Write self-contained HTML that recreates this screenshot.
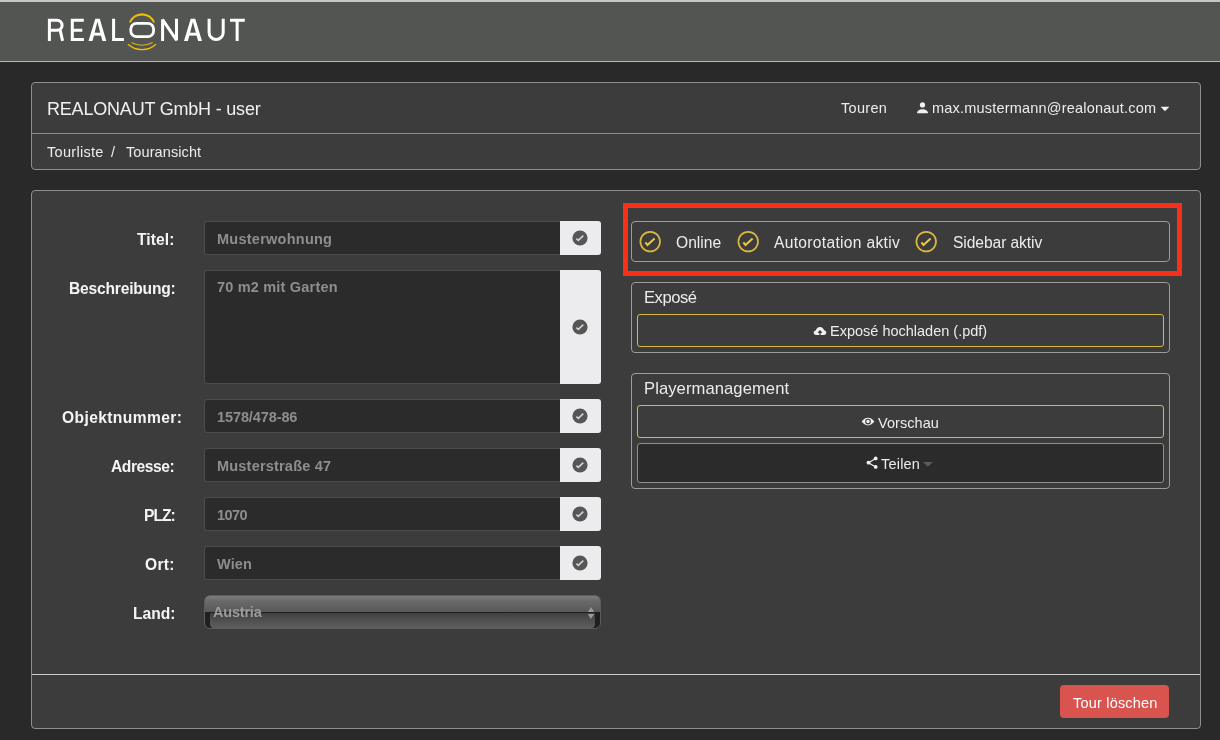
<!DOCTYPE html>
<html><head><meta charset="utf-8">
<style>
*{box-sizing:border-box;margin:0;padding:0}
html,body{width:1220px;height:740px;overflow:hidden;background:#292929;font-family:"Liberation Sans",sans-serif;color:#ececec}
.abs{position:absolute}
#hdr{left:0;top:0;width:1220px;height:62px;background:#535553;border-top:2px solid #c6c6c6;border-bottom:1px solid #dcb94a}
.card{position:absolute;left:31px;width:1170px;background:#3c3c3c;border:1px solid #8e8e8e;border-radius:4px}
.t{position:absolute;white-space:nowrap;will-change:transform}
.n14{font-size:14.5px;line-height:14.5px}
.n15{font-size:15.6px;line-height:15.6px}
.n16{font-size:16.6px;line-height:16.6px}
.lbl{position:absolute;will-change:transform;font-weight:bold;font-size:15.6px;line-height:15.6px;color:#f4f4f4;white-space:nowrap}
.inp{position:absolute;left:204px;width:357px;height:34px;background:#2b2b2b;border:1px solid #4c4c4c;border-right:none;border-radius:3px 0 0 3px}
.iv{position:absolute;will-change:transform;left:217px;font-weight:bold;font-size:14.5px;line-height:14.5px;color:#8e8e8e;white-space:nowrap}
.add{position:absolute;left:560px;width:41px;height:34px;background:#ececee;border-radius:0 3px 3px 0}
.add svg{position:absolute;left:12px;width:16px;height:16px}
.panel{position:absolute;left:631px;width:539px;border:1px solid #9c9c9c;border-radius:4px}
.btn{position:absolute;left:637px;width:527px;border:1px solid #dcb743;border-radius:3px}
</style></head><body>
<div id="hdr" class="abs"></div>
<svg class="abs" style="left:0;top:0" width="260" height="62" viewBox="0 0 260 62">
 <g fill="none" stroke="#fff" stroke-width="3" stroke-linecap="butt" stroke-linejoin="miter">
  <path d="M49.4,40.9V20.35H57.2A4.9,4.9 0 0 1 57.2,30.15H49.4M60.2,30.3L62.6,40.9"/>
  <path d="M83.8,20.35H72.3V39.4H83.9M72.3,30.3H82.3"/>
  <path d="M113.6,18.85V39.4H123.9"/>
  <path d="M162.6,40.9V19.6L176.5,40.2V18.85" stroke-linejoin="bevel"/>
  <path d="M209.1,18.85V32.4A7.05,7.05 0 0 0 223.2,32.4V18.85"/>
  <path d="M230,20.35H244.8M237.15,20.35V40.9"/>
  <rect x="130.8" y="23.3" width="22.8" height="13.4" rx="5.8" stroke-width="2.8"/>
 </g>
 <g fill="#fff">
  <polygon points="88.5,40.9 95.3,18.85 99.8,18.85 106.3,40.9 102.4,40.9 97.4,21.8 92.5,40.9"/>
  <rect x="93" y="32.7" width="9" height="2.9"/>
  <polygon points="184,40.9 190.7,18.85 195.2,18.85 202,40.9 198.1,40.9 192.9,21.8 187.9,40.9"/>
  <rect x="188.5" y="32.7" width="9" height="2.9"/>
 </g>
 <path d="M128.95,22.5A13.8,13.8 0 0 1 155.05,22.5L153.24,22.5A12.6,12.6 0 0 0 130.76,22.5Z" fill="#f2c200"/>
 <g fill="none" stroke="#f2c200">
  <path d="M128,44.3A21,21 0 0 0 156,44.3" stroke-width="1.3"/>
  <path d="M131.6,42.8A23.5,23.5 0 0 0 152.6,42.4" stroke-width="1.1" stroke="#dcb020"/>
 </g>
</svg>

<div class="card" style="top:82px;height:88px">
  <div class="abs" style="left:0;top:50px;width:1168px;height:1px;background:#8e8e8e"></div>
</div>
<div class="t" style="left:47px;top:99.5px;font-size:18px;line-height:18px;letter-spacing:-0.2px;color:#f0f0f0">REALONAUT GmbH - user</div>
<div class="t n14" style="left:841px;top:101px;letter-spacing:0.3px">Touren</div>
<svg class="abs" style="left:916px;top:101px" width="13" height="13" viewBox="0 0 13 13"><circle cx="6.5" cy="3.9" r="2.6" fill="#f0f0f0"/><path d="M1,12.2C1,9.4 4,8.2 6.5,8.2C9,8.2 12,9.4 12,12.2Z" fill="#f0f0f0"/></svg>
<div class="t n14" style="left:932px;top:101px;letter-spacing:0.2px">max.mustermann@realonaut.com</div>
<svg class="abs" style="left:1160px;top:106px" width="10" height="6" viewBox="0 0 10 6"><polygon points="0.6,0.8 9.4,0.8 5,5.3" fill="#f0f0f0"/></svg>
<div class="t n14" style="left:47px;top:144.5px;letter-spacing:0.3px">Tourliste</div>
<div class="t n14" style="left:111px;top:144.5px">/</div>
<div class="t n14" style="left:125.5px;top:144.5px;letter-spacing:0.1px">Touransicht</div>

<div class="card" style="top:190px;height:539px">
  <div class="abs" style="left:0;top:483px;width:1168px;height:1px;background:#cfcfcf"></div>
</div>
<div class="abs" style="left:1060px;top:685px;width:109px;height:33px;background:#d9534f;border-radius:4px"></div>
<div class="t n14" style="left:1073px;top:695.8px;color:#fff;letter-spacing:0.2px">Tour löschen</div>

<!-- form -->
<div class="lbl" style="left:137px;top:231.5px;letter-spacing:0.1px">Titel:</div>
<div class="inp" style="top:221px"></div><div class="iv" style="top:232px;letter-spacing:0.25px">Musterwohnung</div>
<div class="add" style="top:221px"><svg style="top:9px" viewBox="0 0 16 16"><circle cx="8" cy="8" r="7.6" fill="#565656"/><path d="M4.4,8.6L6.3,10.4L11.3,5.6" fill="none" stroke="#d4d4d4" stroke-width="1.5"/></svg></div>

<div class="lbl" style="left:68.5px;top:280.5px;letter-spacing:-0.2px">Beschreibung:</div>
<div class="inp" style="top:270px;height:114px"></div><div class="iv" style="top:280px;letter-spacing:0.19px">70 m2 mit Garten</div>
<div class="add" style="top:270px;height:114px"><svg style="top:49px" viewBox="0 0 16 16"><circle cx="8" cy="8" r="7.6" fill="#565656"/><path d="M4.4,8.6L6.3,10.4L11.3,5.6" fill="none" stroke="#d4d4d4" stroke-width="1.5"/></svg></div>

<div class="lbl" style="left:62px;top:409.5px;letter-spacing:0.39px">Objektnummer:</div>
<div class="inp" style="top:399px"></div><div class="iv" style="top:409.5px;letter-spacing:-0.1px">1578/478-86</div>
<div class="add" style="top:399px"><svg style="top:9px" viewBox="0 0 16 16"><circle cx="8" cy="8" r="7.6" fill="#565656"/><path d="M4.4,8.6L6.3,10.4L11.3,5.6" fill="none" stroke="#d4d4d4" stroke-width="1.5"/></svg></div>

<div class="lbl" style="left:110.5px;top:458.5px;letter-spacing:-0.42px">Adresse:</div>
<div class="inp" style="top:448px"></div><div class="iv" style="top:458.5px;letter-spacing:0.2px">Musterstraße 47</div>
<div class="add" style="top:448px"><svg style="top:9px" viewBox="0 0 16 16"><circle cx="8" cy="8" r="7.6" fill="#565656"/><path d="M4.4,8.6L6.3,10.4L11.3,5.6" fill="none" stroke="#d4d4d4" stroke-width="1.5"/></svg></div>

<div class="lbl" style="left:143.5px;top:507.5px;letter-spacing:-1px">PLZ:</div>
<div class="inp" style="top:497px"></div><div class="iv" style="top:507.5px;letter-spacing:-0.6px">1070</div>
<div class="add" style="top:497px"><svg style="top:9px" viewBox="0 0 16 16"><circle cx="8" cy="8" r="7.6" fill="#565656"/><path d="M4.4,8.6L6.3,10.4L11.3,5.6" fill="none" stroke="#d4d4d4" stroke-width="1.5"/></svg></div>

<div class="lbl" style="left:145px;top:556.5px;letter-spacing:0.25px">Ort:</div>
<div class="inp" style="top:546px"></div><div class="iv" style="top:556.5px;letter-spacing:0.1px">Wien</div>
<div class="add" style="top:546px"><svg style="top:9px" viewBox="0 0 16 16"><circle cx="8" cy="8" r="7.6" fill="#565656"/><path d="M4.4,8.6L6.3,10.4L11.3,5.6" fill="none" stroke="#d4d4d4" stroke-width="1.5"/></svg></div>

<div class="lbl" style="left:133px;top:605.5px">Land:</div>
<div class="abs" style="left:204px;top:595px;width:397px;height:34px;border-radius:6px;border:1px solid #5c5c5c;overflow:hidden;background:linear-gradient(#7c7c7c 0,#6a6a6a 5px,#595959 15.5px,#202020 16px,#202020 100%)">
 <div class="abs" style="left:5px;top:17px;right:5px;bottom:0.5px;border-radius:0 0 4px 4px;background:linear-gradient(#3f3f3f,#4a4a4a 30%,#5e5e5e)"></div>
 <svg class="abs" style="left:382px;top:9.5px" width="8" height="14" viewBox="0 0 8 14"><polygon points="0.8,6 7.2,6 4,1" fill="#9a9a9a"/><polygon points="0.8,8 7.2,8 4,13" fill="#9a9a9a"/></svg>
</div>
<div class="t" style="left:213px;top:604.5px;font-size:14.5px;line-height:14.5px;font-weight:bold;color:#9c9c9c;letter-spacing:-0.2px">Austria</div>

<!-- right -->
<div class="abs" style="left:623px;top:203px;width:559px;height:72.5px;border:5px solid #fa2f19"></div>
<div class="panel" style="top:221px;height:41px"></div>
<svg class="abs" style="left:637px;top:229px" width="26" height="26" viewBox="0 0 26 26"><circle cx="13.2" cy="12.6" r="9.8" fill="none" stroke="#dcb841" stroke-width="1.7"/><path d="M8.4,13.4L10.5,16.1L17.6,9.5" fill="none" stroke="#efc83c" stroke-width="2"/></svg>
<div class="t n15" style="left:676px;top:234.8px">Online</div>
<svg class="abs" style="left:735px;top:229px" width="26" height="26" viewBox="0 0 26 26"><circle cx="13.2" cy="12.6" r="9.8" fill="none" stroke="#dcb841" stroke-width="1.7"/><path d="M8.4,13.4L10.5,16.1L17.6,9.5" fill="none" stroke="#efc83c" stroke-width="2"/></svg>
<div class="t n15" style="left:774px;top:234.8px;letter-spacing:0.31px">Autorotation aktiv</div>
<svg class="abs" style="left:913px;top:229px" width="26" height="26" viewBox="0 0 26 26"><circle cx="13.2" cy="12.6" r="9.8" fill="none" stroke="#dcb841" stroke-width="1.7"/><path d="M8.4,13.4L10.5,16.1L17.6,9.5" fill="none" stroke="#efc83c" stroke-width="2"/></svg>
<div class="t n15" style="left:952.5px;top:234.8px;letter-spacing:-0.07px">Sidebar aktiv</div>

<div class="panel" style="top:282px;height:71px"></div>
<div class="t n16" style="left:644px;top:289.5px;letter-spacing:-0.45px">Exposé</div>
<div class="btn" style="top:314px;height:33px"></div>
<svg class="abs" style="left:813px;top:326px" width="14" height="10" viewBox="0 0 14 10"><path d="M3,9C1.6,9 0.7,8 0.7,6.8C0.7,5.6 1.6,4.7 2.8,4.6C3.2,2.6 4.9,1 7,1C9,1 10.6,2.4 11,4.3C12.3,4.5 13.3,5.5 13.3,6.8C13.3,8 12.3,9 11,9Z" fill="#f0f0f0"/><path d="M7,9V5.2M5.3,6.8L7,5L8.7,6.8" fill="none" stroke="#3c3c3c" stroke-width="1.3"/></svg>
<div class="t n14" style="left:830px;top:323.5px">Exposé hochladen (.pdf)</div>

<div class="panel" style="top:373px;height:116px"></div>
<div class="t n16" style="left:644px;top:380.5px;letter-spacing:0.08px">Playermanagement</div>
<div class="btn" style="top:405px;height:33px"></div>
<svg class="abs" style="left:861px;top:417px" width="14" height="9" viewBox="0 0 14 9"><path d="M0.7,4.6C2.3,2.2 4.5,0.8 7,0.8C9.5,0.8 11.7,2.2 13.3,4.6C11.7,7 9.5,8.4 7,8.4C4.5,8.4 2.3,7 0.7,4.6Z" fill="#f0f0f0"/><circle cx="7" cy="4.6" r="2.3" fill="none" stroke="#3c3c3c" stroke-width="1.1"/></svg>
<div class="t n14" style="left:877.5px;top:415.8px;letter-spacing:0.05px">Vorschau</div>
<div class="btn" style="top:443px;height:40px;background:#2b2b2b;border-color:#8f8f8f"></div>
<svg class="abs" style="left:866px;top:456px" width="12" height="13" viewBox="0 0 12 13"><path d="M9.7,2.4L2.5,6.7L9.7,10.9" fill="none" stroke="#f0f0f0" stroke-width="1.2"/><circle cx="9.7" cy="2.4" r="1.9" fill="#f0f0f0"/><circle cx="2.5" cy="6.7" r="1.9" fill="#f0f0f0"/><circle cx="9.7" cy="10.9" r="1.9" fill="#f0f0f0"/></svg>
<div class="t n14" style="left:881px;top:457px;letter-spacing:0.2px">Teilen</div>
<svg class="abs" style="left:922px;top:461px" width="12" height="7" viewBox="0 0 12 7"><polygon points="1,1 10.7,1 5.85,5.8" fill="#5c5c5c"/></svg>
</body></html>
